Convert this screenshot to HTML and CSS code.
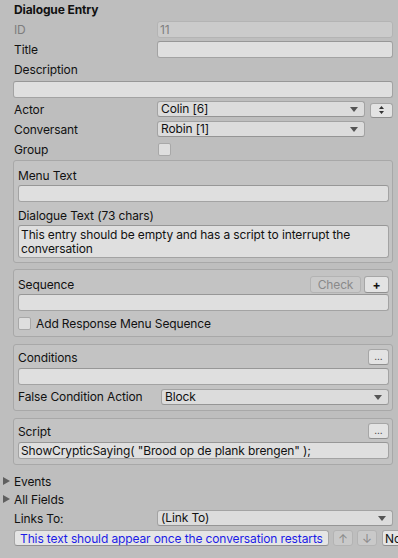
FILE: index.html
```html
<!DOCTYPE html>
<html>
<head>
<meta charset="utf-8">
<link rel="stylesheet" href="styles.css">
</head>
<body>
<div class="inspector">
  <div class="title">Dialogue Entry</div>
  <div class="row"><span class="lbl dim">ID</span><div class="field ro">11</div></div>
  <div class="row"><span class="lbl">Title</span><div class="field"></div></div>
  <div class="row"><span class="lbl">Description</span></div>
  <div class="row"><div class="field"></div></div>
  <div class="row">
    <span class="lbl">Actor</span>
    <div class="popup">Colin [6]<svg class="arr" viewBox="0 0 8 5" width="8" height="5"><path d="M0 0H8L4 5Z"/></svg></div>
    <button class="btn updown"><svg viewBox="0 0 5 10" width="5" height="10"><path d="M2.5 1L5 4H0Z M2.5 9L0 6H5Z"/></svg></button>
  </div>
  <div class="row">
    <span class="lbl">Conversant</span>
    <div class="popup narrow">Robin [1]<svg class="arr" viewBox="0 0 8 5" width="8" height="5"><path d="M0 0H8L4 5Z"/></svg></div>
  </div>
  <div class="row"><span class="lbl">Group</span><span class="check"></span></div>

  <div class="box b1">
    <div class="row"><span class="lbl">Menu Text</span></div>
    <div class="field blk"></div>
    <div class="row"><span class="lbl wide">Dialogue Text (73 chars)</span></div>
    <div class="field area">This entry should be empty and has a script to interrupt the conversation</div>
  </div>

  <div class="box b2">
    <div class="row">
      <span class="lbl grow">Sequence</span>
      <button class="btn dis check-btn">Check</button>
      <button class="btn plus">+</button>
    </div>
    <div class="field"></div>
    <div class="row crow"><span class="check"></span><span class="clbl">Add Response Menu Sequence</span></div>
  </div>

  <div class="box b3">
    <div class="row hrow">
      <span class="lbl grow">Conditions</span>
      <button class="btn dots">...</button>
    </div>
    <div class="field"></div>
    <div class="row frow">
      <span class="lbl bl">False Condition Action</span>
      <div class="popup">Block<svg class="arr" viewBox="0 0 8 5" width="8" height="5"><path d="M0 0H8L4 5Z"/></svg></div>
    </div>
  </div>

  <div class="box b4">
    <div class="row hrow">
      <span class="lbl grow">Script</span>
      <button class="btn dots">...</button>
    </div>
    <div class="field script">ShowCrypticSaying( "Brood op de plank brengen" );</div>
  </div>

  <div class="fold first"><svg viewBox="0 0 7 8" width="7" height="8"><path d="M0 0L7 4L0 8Z"/></svg><span>Events</span></div>
  <div class="fold"><svg viewBox="0 0 7 8" width="7" height="8"><path d="M0 0L7 4L0 8Z"/></svg><span>All Fields</span></div>
  <div class="row">
    <span class="lbl">Links To:</span>
    <div class="popup">(Link To)<svg class="arr" viewBox="0 0 8 5" width="8" height="5"><path d="M0 0H8L4 5Z"/></svg></div>
  </div>
  <div class="row linkrow">
    <button class="btn link">This text should appear once the conversation restarts</button>
    <button class="btn dis arrowbtn">↑</button>
    <button class="btn dis arrowbtn">↓</button>
    <button class="btn none">None</button>
  </div>
</div>
</body>
</html>
```

FILE: styles.css
```css
html, body {
  margin: 0;
  padding: 0;
  background: #bebebe;
  overflow: hidden;
}
body {
  width: 398px;
  height: 558px;
  font-family: Inter, "Noto Sans", "Liberation Sans", sans-serif;
  font-size: 12px;
  letter-spacing: -0.12px;
  color: #111;
}
.inspector {
  padding: 0 5px 0 13px;
}
.title {
  height: 19px;
  line-height: 19px;
  font-weight: bold;
  padding-left: 1px;
}
.row {
  display: flex;
  align-items: center;
  height: 20px;
}
.lbl {
  flex: none;
  width: 144px;
  padding-left: 1px;
  box-sizing: border-box;
  white-space: nowrap;
}
.lbl.dim { color: #7d7d7d; }
.lbl.grow { flex: 1; width: auto; }
.lbl.wide { width: auto; }
.box .lbl { width: 143px; padding-left: 0; }
.box .lbl.grow { width: auto; }
.field {
  flex: 1;
  height: 17px;
  box-sizing: border-box;
  background: #dfdfdf;
  border: 1px solid #a3a3a3;
  border-top-color: #979797;
  border-radius: 3px;
  padding: 0 2px;
  line-height: 15px;
  white-space: nowrap;
  overflow: hidden;
}
.field.ro {
  background: #cbcbcb;
  border-color: #b4b4b4;
  color: #7f7f7f;
}
.field.blk { margin-bottom: 3px; }
.field.area {
  height: 33px;
  white-space: normal;
  line-height: 14px;
  padding: 2px 2px 0 2px;
}
.popup {
  flex: 1;
  height: 16px;
  box-sizing: border-box;
  background: #dcdcdc;
  border: 1px solid #a3a3a3;
  border-bottom-color: #959595;
  border-radius: 3px;
  padding: 0 3px;
  line-height: 14px;
  display: flex;
  align-items: center;
  justify-content: space-between;
}
.popup.narrow { flex: none; width: 208px; }
.arr { fill: #555; margin-right: 3px; }
.btn {
  font-family: inherit;
  font-size: 12px;
  letter-spacing: inherit;
  color: #111;
  background: #e3e3e3;
  border: 1px solid #a6a6a6;
  border-bottom-color: #8f8f8f;
  border-radius: 3px;
  padding: 0;
  margin: 0;
  box-sizing: border-box;
  display: flex;
  align-items: center;
  justify-content: center;
  flex: none;
}
.btn.dis {
  background: #c9c9c9;
  border-color: #b3b3b3;
  color: #8a8a8a;
}
.updown {
  width: 23px;
  height: 15px;
  margin-left: 5px;
  margin-top: 2px;
}
.updown svg { fill: #333; }
.check {
  display: inline-block;
  width: 13px;
  height: 13px;
  box-sizing: border-box;
  background: #dedede;
  border: 1px solid #a8a8a8;
  border-radius: 2px;
  flex: none;
}
.row > .lbl + .check { margin-left: 1px; }
.box {
  background: #c3c3c3;
  border: 1px solid #a8a8a8;
  border-radius: 3px;
  padding: 4px 3px 4px 4px;
  margin-top: 7px;
}
.box.b1 { margin-top: 1px; }
.box.b2 { margin-top: 6px; }
.check-btn {
  width: 51px;
  height: 17px;
  margin-right: 3px;
}
.plus {
  width: 25px;
  height: 17px;
  font-weight: bold;
}
.crow {
  height: 21px;
  align-items: flex-end;
  padding-bottom: 2px;
  box-sizing: border-box;
}
.clbl { margin-left: 5px; line-height: 13px; }
.hrow {
  height: 19px;
  align-items: flex-start;
}
.hrow .lbl { line-height: 17px; }
.dots {
  width: 21px;
  height: 16px;
  font-size: 10px;
  color: #333;
  padding-bottom: 3px;
}
.frow {
  height: 21px;
  align-items: flex-end;
  padding-bottom: 1px;
  box-sizing: border-box;
}
.bl { line-height: 16px; }
.b4 { padding-bottom: 5px; }
.field.script { padding-left: 2px; }
.fold {
  display: flex;
  align-items: center;
  height: 18px;
  margin-left: -10px;
}
.fold.first { margin-top: 7px; }
.fold svg { fill: #5f5f5f; margin-right: 4px; }
.linkrow { height: 20px; }
.link {
  width: 315px;
  height: 16px;
  margin-left: 1px;
  margin-right: 4px;
  justify-content: flex-start;
  padding-left: 5px;
  color: #1c1ce6;
  background: #e5e5e5;
  white-space: nowrap;
}
.arrowbtn {
  width: 20px;
  height: 16px;
  margin-right: 4px;
  font-size: 12px;
}
.arrowbtn + .arrowbtn { margin-right: 5px; }
.none {
  width: 40px;
  height: 16px;
  justify-content: flex-start;
  padding-left: 2px;
  background: #e5e5e5;
}
```
